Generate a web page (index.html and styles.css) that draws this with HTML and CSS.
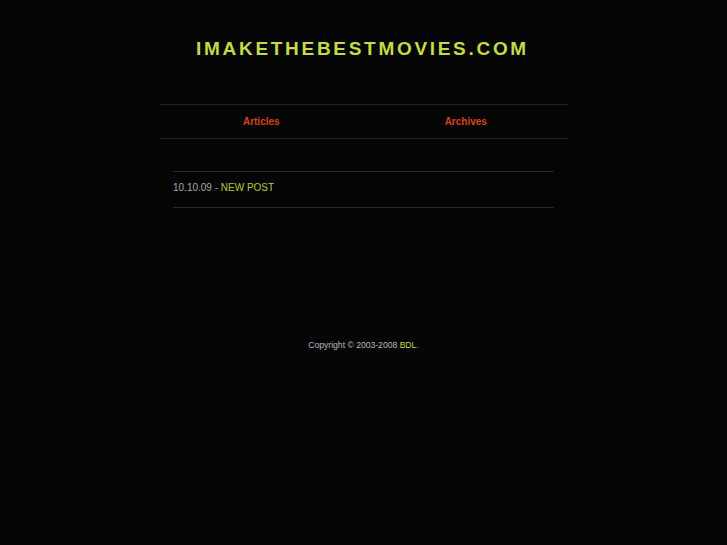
FILE: index.html
```html
<!DOCTYPE html>
<html>
<head>
<meta charset="utf-8">
<link rel="stylesheet" href="styles.css">
</head>
<body>
<div class="page">
  <h1 class="title">IMAKETHEBESTMOVIES.COM</h1>
  <nav class="nav">
    <a class="nav-link" href="#">Articles</a>
    <a class="nav-link" href="#">Archives</a>
  </nav>
  <div class="content">
    <div class="post"><span class="date">10.10.09 - </span><a class="post-link" href="#">NEW POST</a></div>
  </div>
  <div class="footer">Copyright © 2003-2008 <a class="footer-link" href="#">BDL</a>.</div>
</div>
</body>
</html>
```
FILE: styles.css
```css
html, body {
  margin: 0;
  padding: 0;
  background: #050505;
  font-family: "Liberation Sans", Arial, sans-serif;
}
.page {
  width: 409px;
  margin: 0 auto;
  padding-top: 38px;
}
.title {
  margin: 0;
  text-align: center;
  font-size: 19px;
  font-weight: bold;
  letter-spacing: 2.7px;
  color: #c2dc48;
  line-height: 22px;
  padding-right: 2px;
}
.nav {
  margin-top: 44px;
  display: grid;
  grid-template-columns: 1fr 1fr;
  border-top: 1px solid #222;
  border-bottom: 1px solid #222;
  height: 33px;
  align-items: center;
}
.nav-link {
  text-align: center;
  color: #d2461c;
  font-size: 10px;
  font-weight: bold;
  text-decoration: none;
}
.content {
  margin: 32px 14px 0;
  border-top: 1px solid #2a2a2a;
  border-bottom: 1px solid #2a2a2a;
  display: flex;
  align-items: center;
  padding-bottom: 4px;
  box-sizing: border-box;
  height: 37px;
}
.post {
  font-size: 10px;
  color: #a8a8a8;
}
.post-link {
  color: #b4cc40;
  text-decoration: none;
}
.footer {
  margin-top: 132px;
  text-align: center;
  font-size: 8.6px;
  color: #bbb;
}
.footer-link {
  color: #c2dc48;
  text-decoration: none;
}
```
